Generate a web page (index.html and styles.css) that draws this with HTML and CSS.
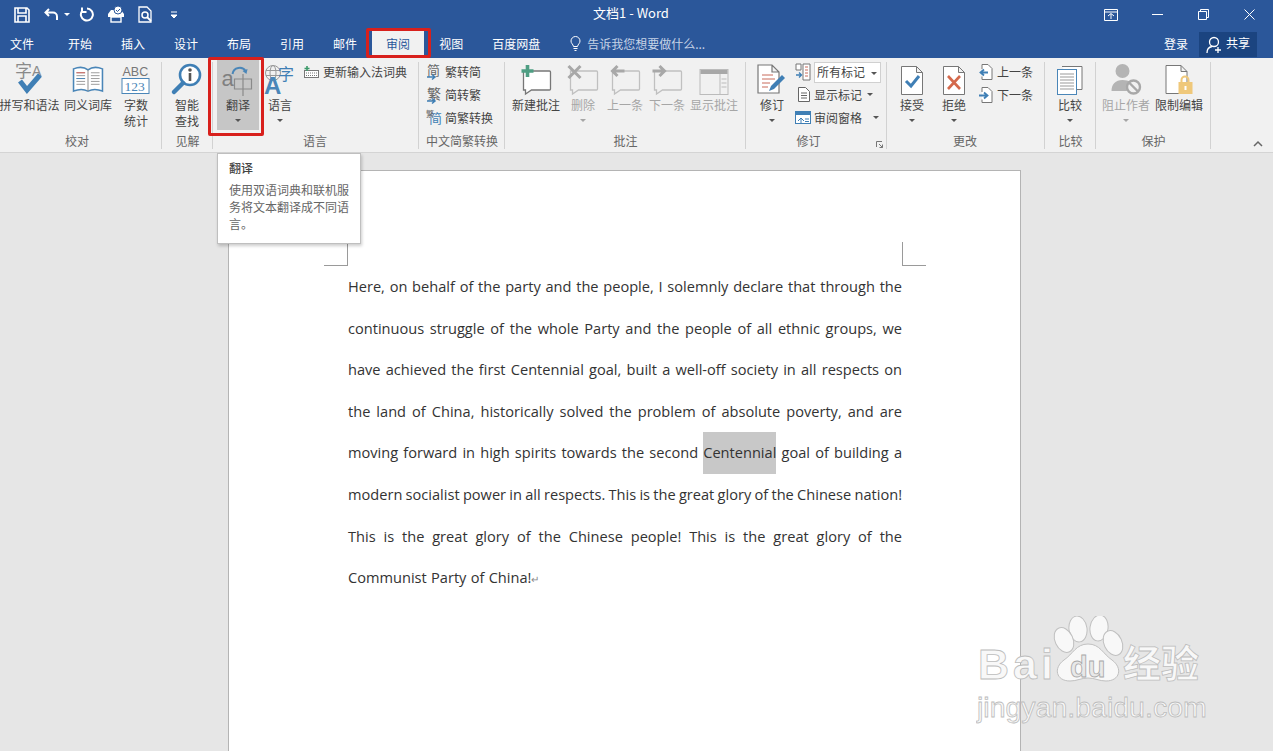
FILE: index.html
```html
<!DOCTYPE html>
<html lang="zh">
<head>
<meta charset="utf-8">
<title>文档1 - Word</title>
<link rel="stylesheet" href="styles.css">
</head>
<body>
<div class="app">
  <header class="titlebar">
    <div class="qat">
      <svg class="q-save" width="16" height="16" viewBox="0 0 16 16"><path d="M1 1h12l2 2v12H1z M4 1v5h8V1 M4 15v-6h8v6" fill="none" stroke="#fff" stroke-width="1.6"/></svg>
      <svg class="q-undo" width="15" height="14" viewBox="0 0 15 14"><path d="M5 1L1.500 4.500 5 8M2 4.500h7a4 4 0 0 1 4 4V12" fill="none" stroke="#fff" stroke-width="2"/></svg>
      <span class="mini-caret"></span>
      <svg class="q-redo" width="15" height="15" viewBox="0 0 15 15"><path d="M8 1.500A6 6 0 1 1 3 4M3 .5V5h4.500" fill="none" stroke="#fff" stroke-width="2"/></svg>
      <svg class="q-touch" width="18" height="17" viewBox="0 0 18 17"><path d="M4 4h10l3 4v3H1V8z" fill="#fff"/><rect x="4" y="11" width="10" height="5" fill="none" stroke="#fff" stroke-width="1.400"/><circle cx="11" cy="4" r="4" fill="#fff" stroke="#2b579a"/><path d="M9 4l1.500 1.500L13 3" stroke="#2b579a" fill="none"/></svg>
      <svg class="q-preview" width="15" height="17" viewBox="0 0 15 17"><path d="M1 1h8l4 4v11H1z" fill="none" stroke="#fff" stroke-width="1.300"/><circle cx="7" cy="9" r="3" fill="none" stroke="#fff" stroke-width="1.500"/><path d="M9 11l4 4" stroke="#fff" stroke-width="1.800"/></svg>
      <svg class="q-more" width="8" height="8" viewBox="0 0 8 8"><path d="M1 1h6M1 4l3 3 3-3z" stroke="#fff" fill="#fff"/></svg>
    </div>
    <div class="doc-title">文档1 - Word</div>
    <div class="win">
      <svg class="w-ribbon" width="14" height="12" viewBox="0 0 14 12"><path d="M.5 .5h13v11H.5zM.5 3h13M4 7l3-2.500L10 7M7 5v5" fill="none" stroke="#fff"/></svg>
      <svg class="w-min" width="11" height="11" viewBox="0 0 11 11"><path d="M0 5.500h11" stroke="#fff"/></svg>
      <svg class="w-max" width="11" height="11" viewBox="0 0 11 11"><path d="M.5 2.500h8v8h-8zM2.500 2.500v-2h8v8h-2" fill="none" stroke="#fff"/></svg>
      <svg class="w-close" width="11" height="11" viewBox="0 0 11 11"><path d="M.5 .5l10 10M10.500 .5l-10 10" stroke="#fff"/></svg>
    </div>
  </header>

  <nav class="tabs">
    <span class="tab tab-file">文件</span>
    <span class="tab">开始</span>
    <span class="tab">插入</span>
    <span class="tab">设计</span>
    <span class="tab">布局</span>
    <span class="tab">引用</span>
    <span class="tab">邮件</span>
    <span class="tab tab-active">审阅</span>
    <span class="tab">视图</span>
    <span class="tab">百度网盘</span>
    <span class="tell">
      <svg width="11" height="15" viewBox="0 0 11 15"><path d="M3.500 10.500C3 8 1 7.500 1 5a4.500 4.500 0 0 1 9 0c0 2.500-2 3-2.500 5.500zM3.500 12.500h4M4.500 14.500h2" fill="none" stroke="#fff"/></svg>
      告诉我您想要做什么...
    </span>
    <span class="signin">登录</span>
    <span class="share">
      <svg width="17" height="18" viewBox="0 0 17 18"><circle cx="8" cy="6" r="4.500" fill="none" stroke="#fff" stroke-width="1.300"/><path d="M1 17c0-4 2-6 5-6.500M12 11v6M9 14h6" fill="none" stroke="#fff" stroke-width="1.300"/></svg>
      <span class="share-text">共享</span>
    </span>
  </nav>

  <section class="ribbon">
    <div class="group g-proof">
      <div class="body">
        <div class="big w59">
          <svg class="ic" width="34" height="33" viewBox="0 0 34 33"><text x="2" y="15" class="svg-cjk" font-size="17" fill="#8a8a8a">字</text><text x="19" y="14" class="svg-lat" font-size="14" fill="#8a8a8a">A</text><path d="M7 19l7 9L27 13" fill="none" stroke="#3f7fb5" stroke-width="5"/></svg>
          <span>拼写和语法</span>
        </div>
        <div class="big w58">
          <svg class="ic ic-up2" width="32" height="27" viewBox="0 0 32 28"><path d="M1 3c5-2 11-2 15 1 4-3 10-3 15-1v23c-5-2-11-2-15 0-4-2-10-2-15 0z" fill="#fff" stroke="#4a86b8" stroke-width="1.600"/><path d="M16 4v22" stroke="#888"/><path d="M4 7h9M4 10h9M4 13h9M4 16h9M4 19h9M19 7h9M19 10h9M19 13h9M19 16h9M19 19h9" stroke="#9a9a9a"/><path d="M4 7h9" stroke="#d0605a"/><path d="M4 13h9" stroke="#4a86b8"/></svg>
          <span>同义词库</span>
        </div>
        <div class="big w38">
          <svg class="ic" width="29" height="30" viewBox="0 0 29 30"><text x="1" y="11" class="svg-lat" font-size="12.500" fill="#777">ABC</text><rect x=".5" y="13.500" width="27" height="15" fill="#fff" stroke="#4a86b8"/><text x="3" y="26" class="svg-serif" font-size="13.500" fill="#4a86b8">123</text></svg>
          <span>字数<br>统计</span>
        </div>
      </div>
      <div class="glabel">校对</div>
    </div>

    <div class="group g-insight">
      <div class="body">
        <div class="big w50">
          <svg class="ic" width="30" height="32" viewBox="0 0 30 32"><circle cx="18" cy="12" r="10" fill="#fff" stroke="#3f7fb5" stroke-width="2.600"/><path d="M11 20L2 29" stroke="#3f7fb5" stroke-width="4.500" stroke-linecap="round"/><circle cx="18" cy="7" r="1.800" fill="#555"/><path d="M18 10v8" stroke="#555" stroke-width="2.600"/></svg>
          <span>智能<br>查找</span>
        </div>
      </div>
      <div class="glabel">见解</div>
    </div>

    <div class="group g-lang">
      <div class="body">
        <div class="big w42 pressed">
          <svg class="ic ic-down1" width="33" height="32" viewBox="0 0 33 32"><text x="0" y="22" class="svg-lat" font-size="22" fill="#808080">a</text><path d="M11 10C12 3 21 2 24 7" fill="none" stroke="#4a86b8" stroke-width="2"/><path d="M25 10l-4-3 5-2z" fill="#4a86b8"/><path d="M13 15h17v10H13zM21.500 10v22" fill="none" stroke="#8a8a8a" stroke-width="1.200"/></svg>
          <span>翻译</span>
          <i class="caret"></i>
        </div>
        <div class="big w42">
          <svg class="ic ic-lang" width="32" height="32" viewBox="0 0 32 32"><circle cx="9" cy="10" r="7.500" fill="none" stroke="#999"/><ellipse cx="9" cy="10" rx="3" ry="7.500" fill="none" stroke="#999"/><path d="M2 7.500h14M2 12.500h14" stroke="#999"/><text x="14" y="17" class="svg-cjk" font-size="16" fill="#3f7fb5">字</text><text x="0" y="31" class="svg-lat svg-bold" font-size="24" fill="#4a86b8">A</text></svg>
          <span>语言</span>
          <i class="caret"></i>
        </div>
        <div class="smalls smalls-lang">
          <div class="small">
            <svg width="15" height="12" viewBox="0 0 15 12"><rect x=".5" y="4.500" width="14" height="7" fill="#fff" stroke="#777"/><path d="M2 7h11M2 9.500h11" stroke="#777" stroke-dasharray="1 1"/><path d="M3 0v5M.5 2.500h5" stroke="#3c9a6a" stroke-width="1.600"/></svg>
            <span>更新输入法词典</span>
          </div>
        </div>
      </div>
      <div class="glabel">语言</div>
    </div>

    <div class="group g-cn">
      <div class="body">
        <div class="smalls">
          <div class="small s15">
            <svg width="15" height="18" viewBox="0 0 15 18"><text x="0" y="12" class="svg-cjk" font-size="13" fill="#666">简</text><path d="M0 14h8M5 11.500L8 14l-3 2.500" fill="none" stroke="#3f7fb5" stroke-width="1.500"/></svg>
            <span>繁转简</span>
          </div>
          <div class="small s15">
            <svg width="15" height="18" viewBox="0 0 15 18"><text x="0" y="13" class="svg-cjk" font-size="14" fill="#666">繁</text><path d="M0 15h8M5 12.500L8 15l-3 2.500" fill="none" stroke="#3f7fb5" stroke-width="1.500"/></svg>
            <span>简转繁</span>
          </div>
          <div class="small s15">
            <svg width="15" height="18" viewBox="0 0 15 18"><text x="2" y="14" class="svg-cjk" font-size="13" fill="#3f7fb5">简</text><text x="-1" y="8" class="svg-cjk" font-size="8" fill="#666">繁</text></svg>
            <span>简繁转换</span>
          </div>
        </div>
      </div>
      <div class="glabel">中文简繁转换</div>
    </div>

    <div class="group g-comment">
      <div class="body">
        <div class="big w52">
          <svg class="ic" width="31" height="30" viewBox="0 0 31 30"><path d="M3 6h26a1 1 0 0 1 1 1v17a1 1 0 0 1-1 1H11l-6 4v-4H3z" fill="#fff" stroke="#777" stroke-width="1.300"/><path d="M7 0v12M1 6h12" stroke="#4f9e83" stroke-width="3.600"/></svg>
          <span>新建批注</span>
        </div>
        <div class="big w42 off">
          <svg class="ic" width="31" height="30" viewBox="0 0 31 30"><path d="M3 6h26a1 1 0 0 1 1 1v17a1 1 0 0 1-1 1H11l-6 4v-4H3z" fill="none" stroke="#c0c0c0" stroke-width="1.300"/><path d="M1 1l12 12M13 1L1 13" stroke="#a8a8a8" stroke-width="3"/></svg>
          <span>删除</span>
          <i class="caret"></i>
        </div>
        <div class="big w42 off">
          <svg class="ic" width="31" height="30" viewBox="0 0 31 30"><path d="M3 6h26a1 1 0 0 1 1 1v17a1 1 0 0 1-1 1H11l-6 4v-4H3z" fill="none" stroke="#c0c0c0" stroke-width="1.300"/><path d="M15 6H3M8 1L3 6l5 5" fill="none" stroke="#a8a8a8" stroke-width="3"/></svg>
          <span>上一条</span>
        </div>
        <div class="big w42 off">
          <svg class="ic" width="31" height="30" viewBox="0 0 31 30"><path d="M3 6h26a1 1 0 0 1 1 1v17a1 1 0 0 1-1 1H11l-6 4v-4H3z" fill="none" stroke="#c0c0c0" stroke-width="1.300"/><path d="M1 6h12M8 1l5 5-5 5" fill="none" stroke="#a8a8a8" stroke-width="3"/></svg>
          <span>下一条</span>
        </div>
        <div class="big w52 off">
          <svg class="ic" width="29" height="26" viewBox="0 0 29 26"><rect x=".5" y=".5" width="28" height="25" fill="#f1f1f1" stroke="#bbb"/><rect x="1" y="1" width="27" height="4" fill="#a8a8a8"/><path d="M20.500 5v20M22 10h5M22 14h5M22 18h5" stroke="#bbb"/></svg>
          <span>显示批注</span>
        </div>
      </div>
      <div class="glabel">批注</div>
    </div>

    <div class="group g-track">
      <div class="body">
        <div class="big w40">
          <svg class="ic" width="30" height="31" viewBox="0 0 30 31"><path d="M1 1h14l7 7v21H1zM15 1v7h7" fill="#fff" stroke="#777" stroke-width="1.200"/><path d="M5 11h11M5 15h13M5 19h8M5 23h6" stroke="#c86a5a"/><path d="M12 27l2-5L25 11l3 3-11 11z" fill="#3f7fb5"/></svg>
          <span>修订</span>
          <i class="caret"></i>
        </div>
        <div class="smalls smalls-track">
          <div class="small small-select">
            <svg width="16" height="18" viewBox="0 0 16 18"><path d="M8 1h7v16H8z" fill="#fff" stroke="#777"/><path d="M1 1h5v6H1z" fill="#fff" stroke="#777"/><path d="M10 4h3M10 7h3M10 10h3M10 13h3" stroke="#c86a5a"/><path d="M1 12h5M4 9.500L6.500 12 4 14.500" fill="none" stroke="#3f7fb5" stroke-width="1.300"/></svg>
            <span class="select">所有标记<i class="caret caret-inline caret-box"></i></span>
          </div>
          <div class="small small-tall">
            <svg class="ic-note" width="12" height="15" viewBox="0 0 12 15"><path d="M.5 .5h7l4 4v10H.5z" fill="#fff" stroke="#666"/><path d="M3 6h6M3 8.500h6M3 11h6" stroke="#666"/></svg>
            <span>显示标记</span><i class="caret caret-inline"></i>
          </div>
          <div class="small small-tall">
            <svg width="16" height="13" viewBox="0 0 16 13"><rect x=".5" y=".5" width="15" height="12" fill="#fff" stroke="#3f7fb5"/><rect x="1" y="1" width="14" height="3" fill="#3f7fb5"/><path d="M3 10l3-3 3 3M6 7v5M10 8h4M10 10.500h4" fill="none" stroke="#3f7fb5"/></svg>
            <span>审阅窗格</span><i class="caret caret-inline caret-far"></i>
          </div>
        </div>
      </div>
      <div class="glabel">修订</div>
      <svg class="launcher" width="7" height="7" viewBox="0 0 7 7"><path d="M.5 6V.5H6M3 3l3.500 3.500M6.500 3.500v3h-3" fill="none" stroke="#777"/></svg>
    </div>

    <div class="group g-change">
      <div class="body">
        <div class="big w42">
          <svg class="ic" width="22" height="29" viewBox="0 0 22 29"><path d="M.5 .5h15l6 6v22H.500zM15.500 .5v6h6" fill="#fff" stroke="#777"/><path d="M5 15l5 5 8-10" fill="none" stroke="#3f7fb5" stroke-width="3"/></svg>
          <span>接受</span>
          <i class="caret"></i>
        </div>
        <div class="big w42">
          <svg class="ic" width="22" height="29" viewBox="0 0 22 29"><path d="M.5 .5h15l6 6v22H.500zM15.500 .5v6h6" fill="#fff" stroke="#777"/><path d="M5 10l12 13M17 10L5 23" fill="none" stroke="#d4694c" stroke-width="2.600"/></svg>
          <span>拒绝</span>
          <i class="caret"></i>
        </div>
        <div class="smalls smalls-change">
          <div class="small">
            <svg width="14" height="16" viewBox="0 0 14 16"><path d="M3 5V.5h6l4 4v11H3v-3" fill="#fff" stroke="#777"/><path d="M9 8.500H2M5 5.500L1.500 8.500 5 11.500" fill="none" stroke="#3f7fb5" stroke-width="1.800"/></svg>
            <span>上一条</span>
          </div>
          <div class="small">
            <svg width="14" height="16" viewBox="0 0 14 16"><path d="M3 5V.5h6l4 4v11H3v-3" fill="#fff" stroke="#777"/><path d="M0 8.500h8M5 5.500l3.500 3-3.500 3" fill="none" stroke="#3f7fb5" stroke-width="1.800"/></svg>
            <span>下一条</span>
          </div>
        </div>
      </div>
      <div class="glabel">更改</div>
    </div>

    <div class="group g-compare">
      <div class="body">
        <div class="big w50">
          <svg class="ic" width="26" height="29" viewBox="0 0 26 29"><path d="M5 .5h20v23H19" fill="#fff" stroke="#777"/><rect x=".5" y="3.500" width="19" height="25" fill="#fff" stroke="#4a86b8"/><path d="M3 8h14M3 11h14M3 14h14M3 17h14M3 20h14M3 23h14" stroke="#999"/></svg>
          <span>比较</span>
          <i class="caret"></i>
        </div>
      </div>
      <div class="glabel">比较</div>
    </div>

    <div class="group g-protect">
      <div class="body">
        <div class="big w52 off">
          <svg class="ic" width="31" height="31" viewBox="0 0 31 31"><circle cx="12" cy="7" r="7" fill="#b4b4b4"/><path d="M1 27c0-7 4-11 11-11s9 3 10 6l-6 5z" fill="#b4b4b4"/><circle cx="23" cy="23" r="6.500" fill="#f1f1f1" stroke="#a8a8a8" stroke-width="2.400"/><path d="M18.500 18.500l9 9" stroke="#a8a8a8" stroke-width="2.400"/></svg>
          <span>阻止作者</span>
          <i class="caret"></i>
        </div>
        <div class="big w54">
          <svg class="ic ic-lock" width="27" height="30" viewBox="0 0 27 30"><path d="M.5 .5h15l6 6v22H.500zM15.500 .5v6h6" fill="#fff" stroke="#777"/><path d="M16 18v-3a3.500 3.500 0 0 1 7 0v3" fill="none" stroke="#efc87a" stroke-width="2"/><rect x="13" y="17" width="14" height="12" fill="#efc87a"/><rect x="19" y="21" width="2" height="4" fill="#fff"/></svg>
          <span>限制编辑</span>
        </div>
      </div>
      <div class="glabel">保护</div>
    </div>

    <svg class="collapse" width="10" height="6" viewBox="0 0 10 6"><path d="M1 5l4-4 4 4" fill="none" stroke="#666" stroke-width="1.500"/></svg>

    <div class="tooltip">
      <div class="tip-title">翻译</div>
      <div class="tip-body">使用双语词典和联机服务将文本翻译成不同语言。</div>
    </div>
  </section>

  <main class="workspace">
    <article class="page">
      <div class="crops">
        <span class="crop crop-l"></span>
        <span class="crop crop-r"></span>
      </div>
      <div class="text">
        <p class="line">Here, on behalf of the party and the people, I solemnly declare that through the</p>
        <p class="line">continuous struggle of the whole Party and the people of all ethnic groups, we</p>
        <p class="line">have achieved the first Centennial goal, built a well-off society in all respects on</p>
        <p class="line">the land of China, historically solved the problem of absolute poverty, and are</p>
        <p class="line">moving forward in high spirits towards the second <span class="sel">Centennial</span> goal of building a</p>
        <p class="line">modern socialist power in all respects. This is the great glory of the Chinese nation!</p>
        <p class="line">This is the great glory of the Chinese people! This is the great glory of the</p>
        <p class="line last">Communist Party of China!<span class="para">↵</span></p>
      </div>
    </article>
    <svg class="watermark" width="236" height="112" viewBox="0 0 236 112">
      <g class="wm-shape">
        <ellipse cx="102" cy="13" rx="9" ry="13" transform="rotate(-8 102 13)"/>
        <ellipse cx="123" cy="12" rx="9" ry="13" transform="rotate(8 123 12)"/>
        <ellipse cx="88" cy="24" rx="9" ry="13" transform="rotate(-25 88 24)"/>
        <ellipse cx="137" cy="27" rx="9" ry="13" transform="rotate(-25 137 27)"/>
        <path d="M112 28c12 0 15 10 24 16 11 8 8 21-6 21-7 0-11-3-18-3s-11 3-18 3c-14 0-17-13-6-21 9-6 12-16 24-16z"/>
      </g>
      <text x="2" y="63" textLength="75" class="wm-text wm-bai">Bai</text>
      <text x="94" y="61" class="wm-text wm-du">du</text>
      <text x="147" y="61" class="wm-text wm-cn">经验</text>
      <text x="1" y="101" class="wm-text wm-url">jingyan.baidu.com</text>
    </svg>
  </main>
</div>
</body>
</html>
```

FILE: styles.css
```css
* { box-sizing: border-box; }
html, body { margin: 0; padding: 0; height: 100%; overflow: hidden; }
body { font-family: "Noto Sans CJK SC", "Liberation Sans", sans-serif; font-size: 12px; color: #444; }
.app { width: 1273px; height: 751px; display: flex; flex-direction: column; overflow: hidden; }

.titlebar { height: 29px; background: #2b579a; display: flex; align-items: center; position: relative; color: #fff; flex: none; }
.qat { display: flex; align-items: center; padding-left: 14px; width: 420px; }
.qat svg { flex: none; }
.q-undo { margin-left: 14px; }
.mini-caret { width: 0; height: 0; border: 3px solid transparent; border-top: 3px solid #fff; border-bottom: 0; margin-left: 5px; }
.q-redo { margin-left: 9px; }
.q-touch { margin-left: 13px; }
.q-preview { margin-left: 13px; }
.q-more { margin-left: 17px; }
.doc-title { position: absolute; left: 0; right: 0; top: 4px; text-align: center; font-size: 13px; line-height: 18px; text-indent: -11px; color: #fff; }
.win { margin-left: auto; display: flex; align-items: center; padding-right: 18px; }
.w-min { margin-left: 34px; }
.w-max { margin-left: 35px; }
.w-close { margin-left: 35px; }

.tabs { height: 29px; background: #2b579a; display: flex; align-items: stretch; gap: 1px; flex: none; color: #fff; line-height: 29px; }
.tab { padding: 0 14px; position: relative; }
.tab-file { padding: 0 19px 0 10px; }
.tab-active { background: #f1f1f1; color: #2b579a; }
.tab-active::after { content: ""; position: absolute; left: -6px; right: -7px; top: -1px; bottom: 0; border: 3px solid #d8201c; border-radius: 2px; }
.tell { margin-left: 15px; display: flex; align-items: center; gap: 6px; color: #c6d3e6; }
.signin { margin-left: auto; }
.share { margin: 3px 16px 1px 10px; width: 58px; background: #1b4480; display: flex; align-items: center; gap: 3px; padding-left: 7px; line-height: 25px; }
.share-text { margin-top: -5px; }

.ribbon { height: 95px; background: #f1f1f1; border-bottom: 1px solid #d4d4d4; display: flex; flex: none; position: relative; padding-top: 2px; }
.group { display: flex; flex-direction: column; flex: none; position: relative; height: 90px; }
.group::after { content: ""; position: absolute; right: 0; top: 2px; bottom: 1px; width: 1px; background: #d2d2d2; }
.body { height: 73px; display: flex; align-items: flex-start; }
.glabel { text-align: center; line-height: 16px; color: #666; }
.g-proof { width: 162px; }
.g-proof .glabel { padding-right: 8px; }
.g-insight { width: 51px; }
.g-lang { width: 206px; }
.g-lang .body { padding-left: 4px; }
.g-lang .glabel, .g-change .glabel { padding-right: 2px; }
.g-cn { width: 86px; }
.g-cn .body { padding-left: 8px; }
.g-comment { width: 241px; }
.g-comment .body { padding-left: 5px; }
.g-track { width: 141px; }
.g-track .body { padding-left: 6px; }
.g-track .glabel { padding-right: 16px; }
.g-change { width: 158px; }
.g-change .body { padding-left: 4px; }
.g-compare { width: 51px; }
.g-protect { width: 115px; }
.g-protect .body { padding-left: 4px; }

.ribbon svg { overflow: visible; }
.big { height: 70px; display: flex; flex-direction: column; align-items: center; text-align: center; line-height: 16px; white-space: nowrap; flex: none; padding-top: 37px; position: relative; color: #444; }
.big .ic { position: absolute; bottom: 35px; left: 50%; transform: translateX(-50%); }
.big .ic-up2 { bottom: 37px; }
.big .ic-down1 { bottom: 34px; }
.big .caret { margin-top: 6px; }
.w38 { width: 38px; }
.w40 { width: 40px; }
.w42 { width: 42px; }
.w50 { width: 50px; }
.w52 { width: 52px; }
.w54 { width: 54px; }
.w58 { width: 58px; }
.w59 { width: 59px; }
.pressed { background: #c6c6c6; }
.pressed::after { content: ""; position: absolute; left: -9px; right: -5px; top: -3px; bottom: -6px; border: 3px solid #d8201c; border-radius: 2px; }
.off { color: #a6a6a6; }
.off .caret { border-top-color: #a6a6a6; }
.caret { display: block; width: 0; height: 0; border: 3px solid transparent; border-top: 3px solid #555; border-bottom: 0; }
.caret-inline { display: inline-block; margin-left: 1px; vertical-align: middle; }
.caret-box { margin-left: 6px; }
.caret-far { margin-left: 8px; }

.smalls { display: flex; flex-direction: column; }
.smalls-lang { margin-left: 3px; }
.smalls-track { margin-left: 3px; }
.smalls-change { margin-left: 4px; }
.small { height: 23px; display: flex; align-items: center; gap: 4px; white-space: nowrap; }
.s15 { gap: 3px; }
.small-select { gap: 3px; }
.select { width: 67px; height: 21px; background: #fff; border: 1px solid #d0d0d0; padding-left: 2px; line-height: 18px; margin-top: 2px; }
.small-tall { gap: 4px; padding-left: 3px; }
.small-tall + .small-tall { padding-left: 0; gap: 3px; }
.launcher { position: absolute; right: 4px; bottom: 2px; }
.collapse { position: absolute; right: 10px; bottom: 5px; }

.svg-cjk { font-family: "Noto Sans CJK SC", sans-serif; }
.svg-lat { font-family: "Liberation Sans", sans-serif; }
.svg-bold { font-weight: bold; }
.svg-serif { font-family: "Liberation Serif", serif; }

.tooltip { position: absolute; left: 217px; top: 95px; width: 144px; height: 91px; background: #fff; border: 1px solid #bfbfbf; box-shadow: 1px 2px 3px rgba(0,0,0,.2); padding: 5px 11px; z-index: 5; color: #666; line-height: 17px; }
.tip-title { color: #444; font-weight: 500; margin-bottom: 5px; }

.workspace { flex: 1; background: #e6e6e6; position: relative; padding: 17px 0 0 228px; overflow: hidden; }
.page { width: 793px; height: 700px; background: #fff; border: 1px solid #b4b4b4; padding: 71px 94px 0 95px; }
.crops { display: flex; justify-content: space-between; height: 24px; }
.crop { width: 24px; height: 24px; border-bottom: 1px solid #9a9a9a; }
.crop-l { border-right: 1px solid #9a9a9a; }
.crop-r { border-left: 1px solid #9a9a9a; }
.text { margin: 0 24px; font-family: "Open Sans", sans-serif; font-size: 14.600px; word-spacing: -.8px; color: #333; }
.line { margin: 0; height: 41.600px; line-height: 41.600px; text-align: justify; text-align-last: justify; white-space: nowrap; }
.last { text-align-last: left; word-spacing: .5px; }
.sel { display: inline-block; background: #c8c8c8; }
.para { color: #888; font-size: 10px; }

.watermark { position: absolute; left: 976px; top: 463px; }
.wm-shape { fill: #f8f8f8; stroke: #c0c0c0; stroke-width: 1; }
.wm-text { fill: #f8f8f8; stroke: #bdbdbd; stroke-width: .8; font-family: "Liberation Sans", sans-serif; }
.wm-bai { font-size: 43px; font-weight: bold; }
.wm-du { font-size: 29px; font-weight: bold; fill: #e8e8e8; stroke: #a8a8a8; }
.wm-cn { font-size: 38px; font-family: "Noto Sans CJK SC", sans-serif; font-weight: bold; }
.wm-url { font-size: 28.500px; }
```
